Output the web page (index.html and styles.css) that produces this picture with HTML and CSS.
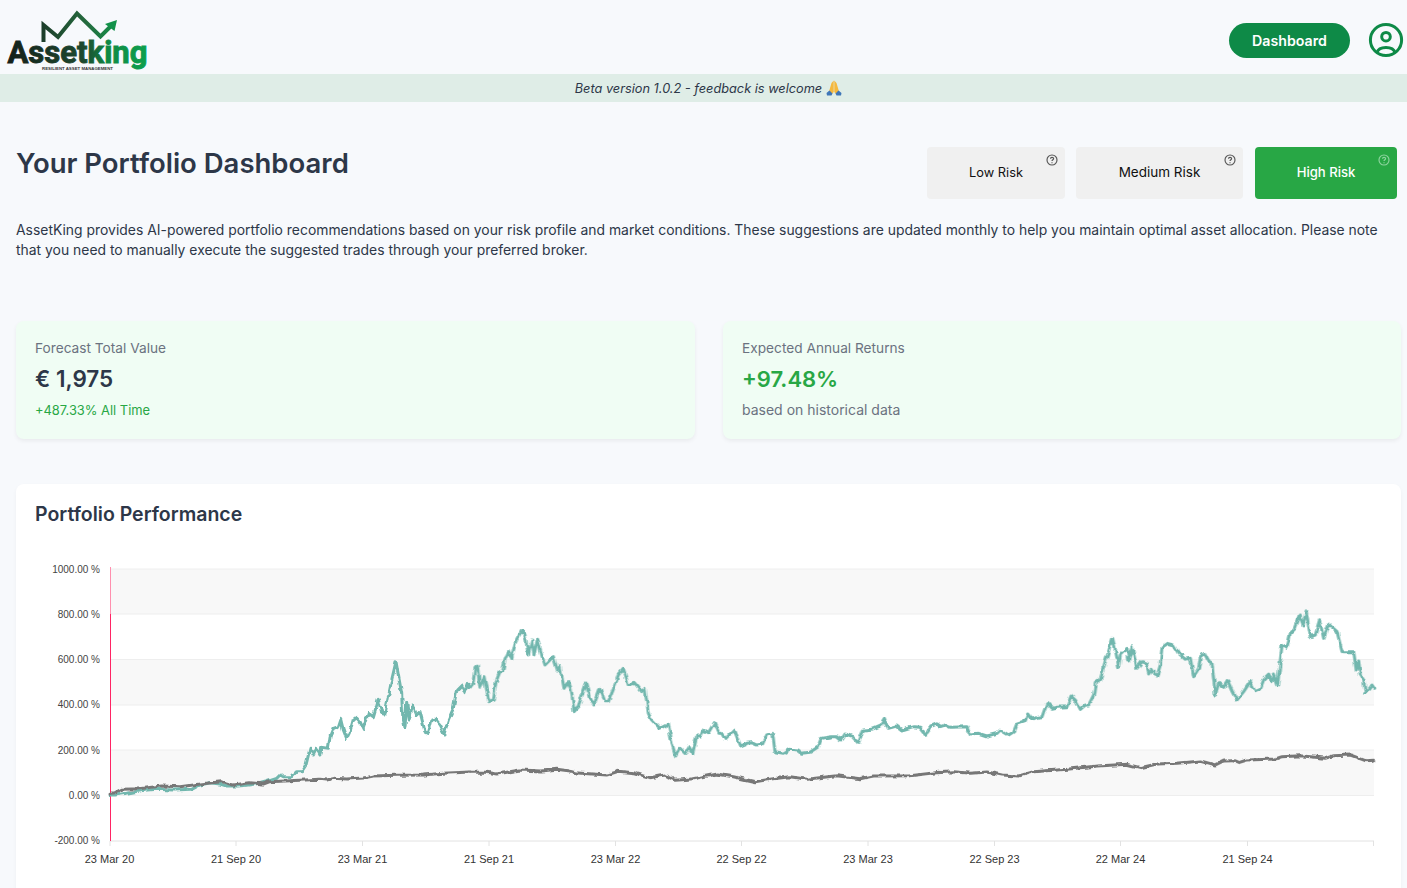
FILE: index.html
```html
<!DOCTYPE html>
<html lang="en">
<head>
<meta charset="utf-8">
<title>AssetKing</title>
<link rel="stylesheet" href="styles.css">
</head>
<body>
<header class="topbar">
  <a class="logo" href="#">
    <svg width="150" height="74" viewBox="0 0 150 74">
      <defs>
        <linearGradient id="wordGrad" x1="0" x2="1" y1="0" y2="0">
          <stop offset="0" stop-color="#14201a"/>
          <stop offset=".55" stop-color="#1d4a30"/>
          <stop offset=".72" stop-color="#0d8a45"/>
          <stop offset="1" stop-color="#0fa04e"/>
        </linearGradient>
        <linearGradient id="peakGrad" gradientUnits="userSpaceOnUse" x1="42" x2="117" y1="0" y2="0">
          <stop offset="0" stop-color="#1c3d2a"/>
          <stop offset=".6" stop-color="#256b3e"/>
          <stop offset="1" stop-color="#12924a"/>
        </linearGradient>
      </defs>
      <path class="logo-peak" d="M43.500 42V25L58 37 77 13.500 100.500 36.500 111 26"/>
      <path class="logo-arrow" d="M105 24L117 20 114.500 31Z"/>
      <text class="logo-word" x="7.500" y="62.500" textLength="140" lengthAdjust="spacingAndGlyphs">Assetking</text>
      <text class="logo-sub" x="42" y="70" textLength="71" lengthAdjust="spacingAndGlyphs">RESILIENT ASSET MANAGEMENT</text>
    </svg>
  </a>
  <div class="top-actions">
    <a class="dash-btn" href="#">Dashboard</a>
    <svg class="user-icon" width="36" height="36" viewBox="0 0 36 36">
      <circle class="ui-stroke" cx="18" cy="18" r="15.600"/>
      <circle class="ui-stroke" cx="18" cy="14.700" r="4.300"/>
      <path class="ui-stroke" d="M9 30.500C10 27 14 25.500 18 25.500S26 27 27 30.500"/>
    </svg>
  </div>
</header>
<div class="beta">
  <span>Beta version 1.0.2 - feedback is welcome</span>
  <svg class="pray" width="16" height="16" viewBox="0 0 16 16">
    <path class="pray-hand" d="M7.700 .500L7.700 12 6 14 3 11.500 5.500 3ZM8.300 .500L8.300 12 10 14 13 11.500 10.500 3Z"/>
    <path class="pray-sleeve" d="M.500 13L3.500 10.500 6.500 13.500 5.500 15.500 1 15.500ZM15.500 13L12.500 10.500 9.500 13.500 10.500 15.500 15 15.500Z"/>
  </svg>
</div>
<main class="page">
  <section class="title-row">
    <h1>Your Portfolio Dashboard</h1>
    <div class="risk-tabs">
      <button class="risk risk-low">Low Risk
        <svg class="help" width="12" height="12" viewBox="0 0 12 12"><circle cx="6" cy="6" r="5"/><path d="M4.500 4.800C4.500 3 7.600 3 7.600 4.700 7.600 5.800 6 5.800 6 7.100"/><path d="M6 8.300V9.200"/></svg>
      </button>
      <button class="risk risk-med">Medium Risk
        <svg class="help" width="12" height="12" viewBox="0 0 12 12"><circle cx="6" cy="6" r="5"/><path d="M4.500 4.800C4.500 3 7.600 3 7.600 4.700 7.600 5.800 6 5.800 6 7.100"/><path d="M6 8.300V9.200"/></svg>
      </button>
      <button class="risk risk-high">High Risk
        <svg class="help" width="12" height="12" viewBox="0 0 12 12"><circle cx="6" cy="6" r="5"/><path d="M4.500 4.800C4.500 3 7.600 3 7.600 4.700 7.600 5.800 6 5.800 6 7.100"/><path d="M6 8.300V9.200"/></svg>
      </button>
    </div>
  </section>
  <p class="intro">AssetKing provides AI-powered portfolio recommendations based on your risk profile and market conditions. These suggestions are updated monthly to help you maintain optimal asset allocation. Please note that you need to manually execute the suggested trades through your preferred broker.</p>
  <section class="stats">
    <div class="stat">
      <div class="stat-label">Forecast Total Value</div>
      <div class="stat-value">€ 1,975</div>
      <div class="stat-note up">+487.33% All Time</div>
    </div>
    <div class="stat">
      <div class="stat-label">Expected Annual Returns</div>
      <div class="stat-value up">+97.48%</div>
      <div class="stat-note">based on historical data</div>
    </div>
  </section>
  <section class="chart-card">
    <h2>Portfolio Performance</h2>
    <svg class="chart" width="1385" height="350" viewBox="16 540 1385 350">
      <defs>
        <filter id="rough" filterUnits="userSpaceOnUse" x="100" y="560" width="1285" height="290" color-interpolation-filters="sRGB">
          <feTurbulence type="fractalNoise" baseFrequency=".14" numOctaves="2" seed="4" result="n"/>
          <feDisplacementMap in="SourceGraphic" in2="n" scale="4.500" xChannelSelector="R" yChannelSelector="G"/>
        </filter>
      </defs>
      <rect class="band" x="110" y="569" width="1264" height="45"/>
      <rect class="band" x="110" y="659.500" width="1264" height="45.500"/>
      <rect class="band" x="110" y="750" width="1264" height="45.500"/>
      <path class="grid" d="M110 569H1374M110 614H1374M110 659.500H1374M110 705H1374M110 750H1374M110 795.500H1374"/>
      <path class="x-axis" d="M110 841H1374"/>
      <path class="x-axis" d="M110 841V846M236 841V846M362.500 841V846M489 841V846M615.500 841V846M741.500 841V846M868 841V846M994.500 841V846M1120.500 841V846M1247.500 841V846M1373.500 841V846"/>
      <path class="marker-soft" d="M110.500 567V614"/>
      <path class="marker" d="M110.500 614V841"/>
      <g class="y-labels">
        <text x="100" y="572.500">1000.00 %</text>
        <text x="100" y="618">800.00 %</text>
        <text x="100" y="663">600.00 %</text>
        <text x="100" y="708">400.00 %</text>
        <text x="100" y="754">200.00 %</text>
        <text x="100" y="799">0.00 %</text>
        <text x="100" y="844">-200.00 %</text>
      </g>
      <g class="x-labels">
        <text x="109.500" y="863">23 Mar 20</text>
        <text x="236" y="863">21 Sep 20</text>
        <text x="362.500" y="863">23 Mar 21</text>
        <text x="489" y="863">21 Sep 21</text>
        <text x="615.500" y="863">23 Mar 22</text>
        <text x="741.500" y="863">22 Sep 22</text>
        <text x="868" y="863">23 Mar 23</text>
        <text x="994.500" y="863">22 Sep 23</text>
        <text x="1120.500" y="863">22 Mar 24</text>
        <text x="1247.500" y="863">21 Sep 24</text>
      </g>
      <g class="rough">
        <g transform="translate(0 560) scale(.33333)">
          <path class="teal" d="M330 705L345 705 380 700 420 692 470 688 520 690 575 688 600 675 630 668 660 672 680 678 710 678 745 675 780 670 800 665 830 655 840 645 850 650 875 650 890 635 905 635 918 615 930 565 940 585 950 565 960 585 965 562 985 565 990 530 1000 505 1015 500 1022 478 1030 510 1040 535 1050 515 1060 478 1068 472 1080 485 1090 505 1105 460 1120 470 1135 418 1145 460 1155 462 1165 410 1175 360 1188 305 1195 345 1205 400 1208 465 1215 500 1220 430 1228 480 1238 435 1250 465 1260 455 1275 515 1285 520 1295 480 1305 478 1318 495 1332 522 1345 480 1360 445 1370 390 1385 375 1395 398 1405 370 1410 385"/>
          <path class="gray" d="M330 700L345 698 365 688 420 686 485 678 540 680 600 672 665 665 700 675 750 668 790 672 810 665 870 662 960 658 980 660 1000 655 1040 657 1090 654 1120 648 1190 646 1270 645 1330 640 1410 636"/>
        </g>
        <g transform="translate(470 600) scale(.33333)">
          <path class="teal" d="M0 265L8 255 15 205 22 198 30 265 42 230 50 270 57 305 70 300 78 245 90 215 98 212 105 180 115 155 125 175 135 130 155 92 165 105 175 165 185 120 192 165 203 115 215 165 225 195 250 170 262 210 270 200 282 265 295 245 303 265 312 332 325 318 348 252 358 290 372 315 390 265 405 305 415 305 430 268 445 225 460 208 475 255 495 250 515 275 525 265 535 340 545 360 570 385 595 372 607 435 617 468 630 445 645 460 657 440 668 460 680 408 692 408 700 390 715 398 733 368 747 400 755 400 765 418 792 390 812 438 830 430 845 428 860 435 878 432 890 405 908 400 915 455 940 460 958 448 985 450 995 460 1020 457 1045 440 1055 415 1085 410 1100 410 1113 420 1125 402 1145 408 1165 430 1180 390 1205 388 1230 378 1243 358 1255 385 1280 378 1295 390 1330 380 1350 382 1367 403 1385 378 1400 372 1410 378"/>
          <path class="gray" d="M0 517L50 517 80 522 150 510 215 513 260 508 295 512 315 518 410 525 445 514 490 518 540 533 585 525 615 541 665 537 740 522 790 530 855 545 905 537 960 530 1010 538 1100 527 1170 536 1210 528 1320 527 1410 517"/>
        </g>
        <g transform="translate(937 600) scale(.33333)">
          <path class="teal" d="M0 372L10 380 25 375 40 382 90 380 100 402 125 400 150 408 180 400 190 390 215 405 230 395 240 370 265 362 272 342 285 358 300 352 315 350 330 308 345 325 360 322 390 320 402 288 415 300 430 328 445 315 455 315 470 285 475 250 490 240 505 185 527 115 535 150 545 200 550 165 570 145 575 180 585 140 600 205 615 185 628 190 635 222 645 208 660 228 670 195 675 140 690 130 710 135 725 160 745 178 760 175 770 230 785 205 790 170 802 160 815 185 825 190 835 285 845 250 860 262 872 242 885 272 900 300 920 275 940 245 955 272 970 265 980 240 995 225 1005 245 1012 225 1022 255 1035 135 1050 145 1060 100 1075 85 1090 45 1098 75 1108 35 1120 110 1135 105 1148 62 1160 115 1175 72 1200 95 1215 155 1250 155 1258 210 1265 180 1270 225 1280 240 1285 280 1305 255 1310 262"/>
          <path class="gray" d="M0 518L50 515 100 520 150 516 195 525 245 528 290 515 390 508 480 498 570 493 610 503 660 492 720 490 790 483 835 495 860 483 890 482 905 488 930 480 1015 477 1035 470 1090 467 1165 475 1190 467 1240 465 1285 482 1310 481"/>
        </g>
      </g>
    </svg>
  </section>
</main>
</body>
</html>
```
FILE: styles.css
```css
* { box-sizing: border-box; }
html, body { margin: 0; height: 888px; overflow: hidden; }
body { background: #f7f9fc; font-family: "Inter", "Liberation Sans", sans-serif; color: #2d3748; }
.topbar { height: 74px; display: flex; justify-content: space-between; align-items: flex-start; }
.logo { display: block; height: 74px; }
.logo svg { display: block; }
.logo-peak { fill: none; stroke: url(#peakGrad); stroke-width: 4; stroke-linejoin: miter; }
.logo-arrow { fill: #12924a; }
.logo-word { font-family: "Roboto", sans-serif; font-weight: 700; font-size: 31px; fill: url(#wordGrad); stroke: url(#wordGrad); stroke-width: .9; }
.logo-sub { font-family: "Liberation Sans", sans-serif; font-weight: 700; font-size: 4px; fill: #333; }
.top-actions { display: flex; align-items: center; gap: 18px; padding: 23px 3px 0 0; }
.dash-btn { width: 121px; height: 35px; border-radius: 18px; background: #0e8a47; color: #fff; font-size: 14.200px; font-weight: 600; display: flex; align-items: center; justify-content: center; text-decoration: none; }
.user-icon { display: block; margin-top: -1px; }
.ui-stroke { fill: none; stroke: #0e8a47; stroke-width: 3; }
.beta { height: 28px; background: #dfede7; display: flex; align-items: center; justify-content: center; gap: 4px; font-size: 12.750px; font-style: italic; color: #2d3748; padding-left: 10px; }
.pray { display: block; }
.pray-sleeve { fill: #3f76b8; }
.pray-hand { fill: #f5b83d; }
.page { padding: 0 6px 0 16px; }
.title-row { display: flex; justify-content: space-between; align-items: flex-start; padding-top: 45px; padding-right: 4px; }
h1 { margin: 0; font-size: 27.500px; line-height: 32px; font-weight: 600; color: #2d3748; }
.risk-tabs { display: flex; gap: 11px; }
.risk { position: relative; height: 52px; border: 0; border-radius: 4px; background: #f0f0f0; color: #111; font: 400 13.500px "Inter", sans-serif; padding: 0 0 2px; }
.risk-low { width: 138px; font-size: 12.800px; }
.risk-med { width: 167px; }
.risk-high { width: 142px; margin-left: 1px; background: #28a745; color: #fff; font-size: 13.100px; font-weight: 500; }
.help { position: absolute; top: 7px; right: 7px; fill: none; stroke: #555; stroke-width: 1.150; }
.risk-high .help { stroke: #8ed49f; }
.intro { margin: 21px 0 0; font-size: 13.920px; line-height: 20px; color: #2d3748; padding-right: 10px; }
.stats { display: grid; grid-template-columns: 679px 678px; gap: 28px; margin-top: 61px; }
.stat { height: 118px; background: #f0fdf4; border-radius: 8px; padding: 17px 19px; box-shadow: 0 2px 4px rgba(0,0,0,.06); }
.stat-label { font-size: 13.700px; line-height: 20px; color: #6b7280; }
.stat-value { margin-top: 6px; font-size: 22.500px; line-height: 30px; font-weight: 600; color: #2d3748; }
.stat-value.up { color: #28a745; font-size: 22px; }
.stat-note { margin-top: 6px; font-size: 14px; line-height: 20px; color: #6b7280; }
.stat-note.up { color: #28a745; font-size: 12.900px; padding-top: 1px; }
.chart-card { margin-top: 45px; height: 420px; background: #fff; border-radius: 8px 8px 0 0; padding-top: 17px; box-shadow: 0 2px 4px rgba(0,0,0,.04); position: relative; }
.chart-card h2 { margin: 0 0 0 19px; font-size: 19.500px; line-height: 26px; font-weight: 600; color: #2d3748; }
.chart { position: absolute; left: 0; top: 56px; display: block; }
.band { fill: #f8f8f8; }
.grid { fill: none; stroke: #eeeeee; stroke-width: 1; }
.x-axis { fill: none; stroke: #e2e2e2; stroke-width: 1; }
.marker { fill: none; stroke: #ff2464; stroke-width: 1; }
.marker-soft { fill: none; stroke: #ff8fae; stroke-width: 1; }
.y-labels text { font: 10px "Liberation Sans", sans-serif; fill: #444; text-anchor: end; }
.x-labels text { font: 11px "Liberation Sans", sans-serif; fill: #333; text-anchor: middle; }
.rough { filter: url(#rough); }
.teal { fill: none; stroke: #72b7ae; stroke-width: 9; stroke-linejoin: round; stroke-linecap: round; }
.gray { fill: none; stroke: #777777; stroke-width: 9; stroke-linejoin: round; stroke-linecap: round; }
```
